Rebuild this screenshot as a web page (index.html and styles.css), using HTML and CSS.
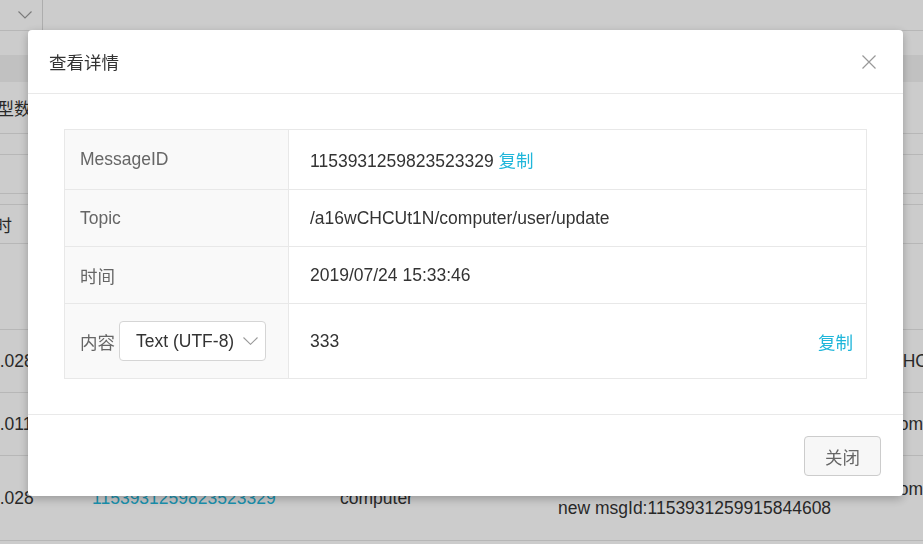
FILE: index.html
```html
<!DOCTYPE html>
<html>
<head>
    <meta charset="UTF-8">
    <meta name="viewport" content="width=device-width, initial-scale=1.0">
    <title>查看详情</title>
    <link rel="stylesheet" href="styles.css">
</head>
<body>
    <div class="page">
        <div class="toolbar">
            <div class="toolbar-select">
                <svg width="14" height="8" viewBox="0 0 14 8"><path d="M0.5 0.5 L7 7 L13.5 0.5" fill="none" stroke="#999" stroke-width="1.1"/></svg>
            </div>
        </div>
        <div class="spacer"></div>
        <div class="thead"></div>
        <div class="row row-type"><span class="clip">类型数据</span></div>
        <div class="row row-thin"></div>
        <div class="row row-mid"></div>
        <div class="row row-hair"></div>
        <div class="row row-mid"><span class="clip-time">超时</span></div>
        <div class="row row-gap"></div>

        <div class="data-row">
            <div class="cell first">0.028</div>
            <div class="cell link">1153931259823523329</div>
            <div class="cell">computer</div>
            <div class="cell">msgId:1153931259823523329</div>
            <div class="cell last">CHCUt1N</div>
        </div>
        <div class="data-row">
            <div class="cell first">0.011</div>
            <div class="cell link">1153931259823523329</div>
            <div class="cell">computer</div>
            <div class="cell">msgId:1153931259823523329</div>
            <div class="cell last">computer</div>
        </div>
        <div class="data-row data-row-tall">
            <div class="cell first">0.028</div>
            <div class="cell link">1153931259823523329</div>
            <div class="cell">computer</div>
            <div class="cell lines">
                <div>1153931259823523329</div>
                <div>new msgId:1153931259915844608</div>
            </div>
            <div class="cell last raised">computer</div>
        </div>
    </div>

    <div class="mask">
        <div class="modal">
            <div class="modal-header">
                <span class="modal-title">查看详情</span>
                <svg class="modal-close" width="14" height="14" viewBox="0 0 14 14"><path d="M0.5 0.5 L13.5 13.5 M13.5 0.5 L0.5 13.5" stroke="#999" stroke-width="1.2"/></svg>
            </div>

            <div class="modal-body">
                <div class="detail">
                    <div class="detail-row row-id">
                        <div class="detail-label">MessageID</div>
                        <div class="detail-value"><span>1153931259823523329 <a class="copy">复制</a></span></div>
                    </div>
                    <div class="detail-row">
                        <div class="detail-label">Topic</div>
                        <div class="detail-value">/a16wCHCUt1N/computer/user/update</div>
                    </div>
                    <div class="detail-row">
                        <div class="detail-label">时间</div>
                        <div class="detail-value">2019/07/24 15:33:46</div>
                    </div>
                    <div class="detail-row row-content">
                        <div class="detail-label">
                            内容
                            <div class="format-select">
                                <span>Text (UTF-8)</span>
                                <svg width="15" height="8" viewBox="0 0 15 8"><path d="M0.5 0.5 L7.5 7.3 L14.5 0.5" fill="none" stroke="#999" stroke-width="1.1"/></svg>
                            </div>
                        </div>
                        <div class="detail-value">
                            <span>333</span>
                            <a class="copy">复制</a>
                        </div>
                    </div>
                </div>
            </div>

            <div class="modal-footer">
                <button class="btn-close">关闭</button>
            </div>
        </div>
    </div>
</body>
</html>
```

FILE: styles.css
```css
* {
    margin: 0;
    padding: 0;
    box-sizing: border-box;
}

body {
    font-family: "Liberation Sans", "Noto Sans CJK SC", sans-serif;
    font-size: 17.5px;
    color: #333;
    background: #fff;
    height: 544px;
    overflow: hidden;
}

/* page behind the dialog */

.toolbar {
    height: 31px;
    border-bottom: 1px solid #e5e5e5;
}

.toolbar-select {
    width: 43px;
    height: 30px;
    border-right: 1px solid #d9d9d9;
    display: flex;
    align-items: center;
    justify-content: flex-end;
    padding-right: 10px;
}

.spacer {
    height: 24px;
}

.thead {
    height: 27px;
    background: #f2f2f2;
}

.row {
    display: flex;
    align-items: center;
    border-bottom: 1px solid #e5e5e5;
    white-space: nowrap;
}

.row-type { height: 52px; }
.row-thin { height: 21px; }
.row-mid { height: 39px; }
.row-hair { height: 11px; }
.row-gap { height: 86px; }

.clip {
    margin-left: -21px;
}

.clip-time {
    margin-left: -23px;
}

.data-row {
    display: grid;
    grid-template-columns: 92px 248px 218px 332px 1fr;
    align-items: center;
    height: 63px;
    border-bottom: 1px solid #e5e5e5;
    white-space: nowrap;
}

.data-row-tall {
    height: 85px;
}

.cell.first {
    margin-left: -10px;
}

.cell.link {
    color: #1fb6da;
}

.cell.lines {
    line-height: 21px;
}

.cell.raised {
    margin-bottom: 18px;
}

/* dialog */

.mask {
    position: fixed;
    inset: 0;
    background: rgba(0, 0, 0, 0.2);
    padding: 30px 0 0 28px;
}

.modal {
    width: 875px;
    background: #fff;
    border-radius: 4px;
    box-shadow: 0 3px 10px rgba(0, 0, 0, 0.25);
}

.modal-header {
    height: 64px;
    padding: 0 27px 0 21px;
    border-bottom: 1px solid #e9e9e9;
    display: flex;
    justify-content: space-between;
    align-items: center;
}

.modal-title {
    color: #333;
}

.modal-body {
    padding: 35px 36px;
}

.detail {
    border: 1px solid #e8e8e8;
}

.detail-row {
    display: grid;
    grid-template-columns: 224px 1fr;
    height: 57px;
    border-bottom: 1px solid #e8e8e8;
}

.detail-row.row-id {
    height: 60px;
}

.detail-row.row-content {
    height: 74px;
    border-bottom: none;
}

.detail-label {
    background: #f9f9f9;
    border-right: 1px solid #e8e8e8;
    padding-left: 15px;
    color: #666;
    display: flex;
    align-items: center;
}

.detail-value {
    padding: 0 13px 0 21px;
    display: flex;
    justify-content: space-between;
    align-items: center;
    white-space: nowrap;
}

.copy {
    color: #1fb6da;
    cursor: pointer;
}

.format-select {
    margin-left: 4px;
    width: 147px;
    height: 40px;
    background: #fff;
    border: 1px solid #d5d5d5;
    border-radius: 4px;
    padding: 0 7px 0 16px;
    display: flex;
    justify-content: space-between;
    align-items: center;
    color: #333;
}

.modal-footer {
    border-top: 1px solid #e9e9e9;
    padding: 21px 22px 20px;
    display: flex;
    justify-content: flex-end;
}

.btn-close {
    width: 77px;
    height: 40px;
    background: #f7f7f7;
    border: 1px solid #ccc;
    border-radius: 4px;
    color: #666;
    font-family: inherit;
    font-size: 17.5px;
    cursor: pointer;
}
```
